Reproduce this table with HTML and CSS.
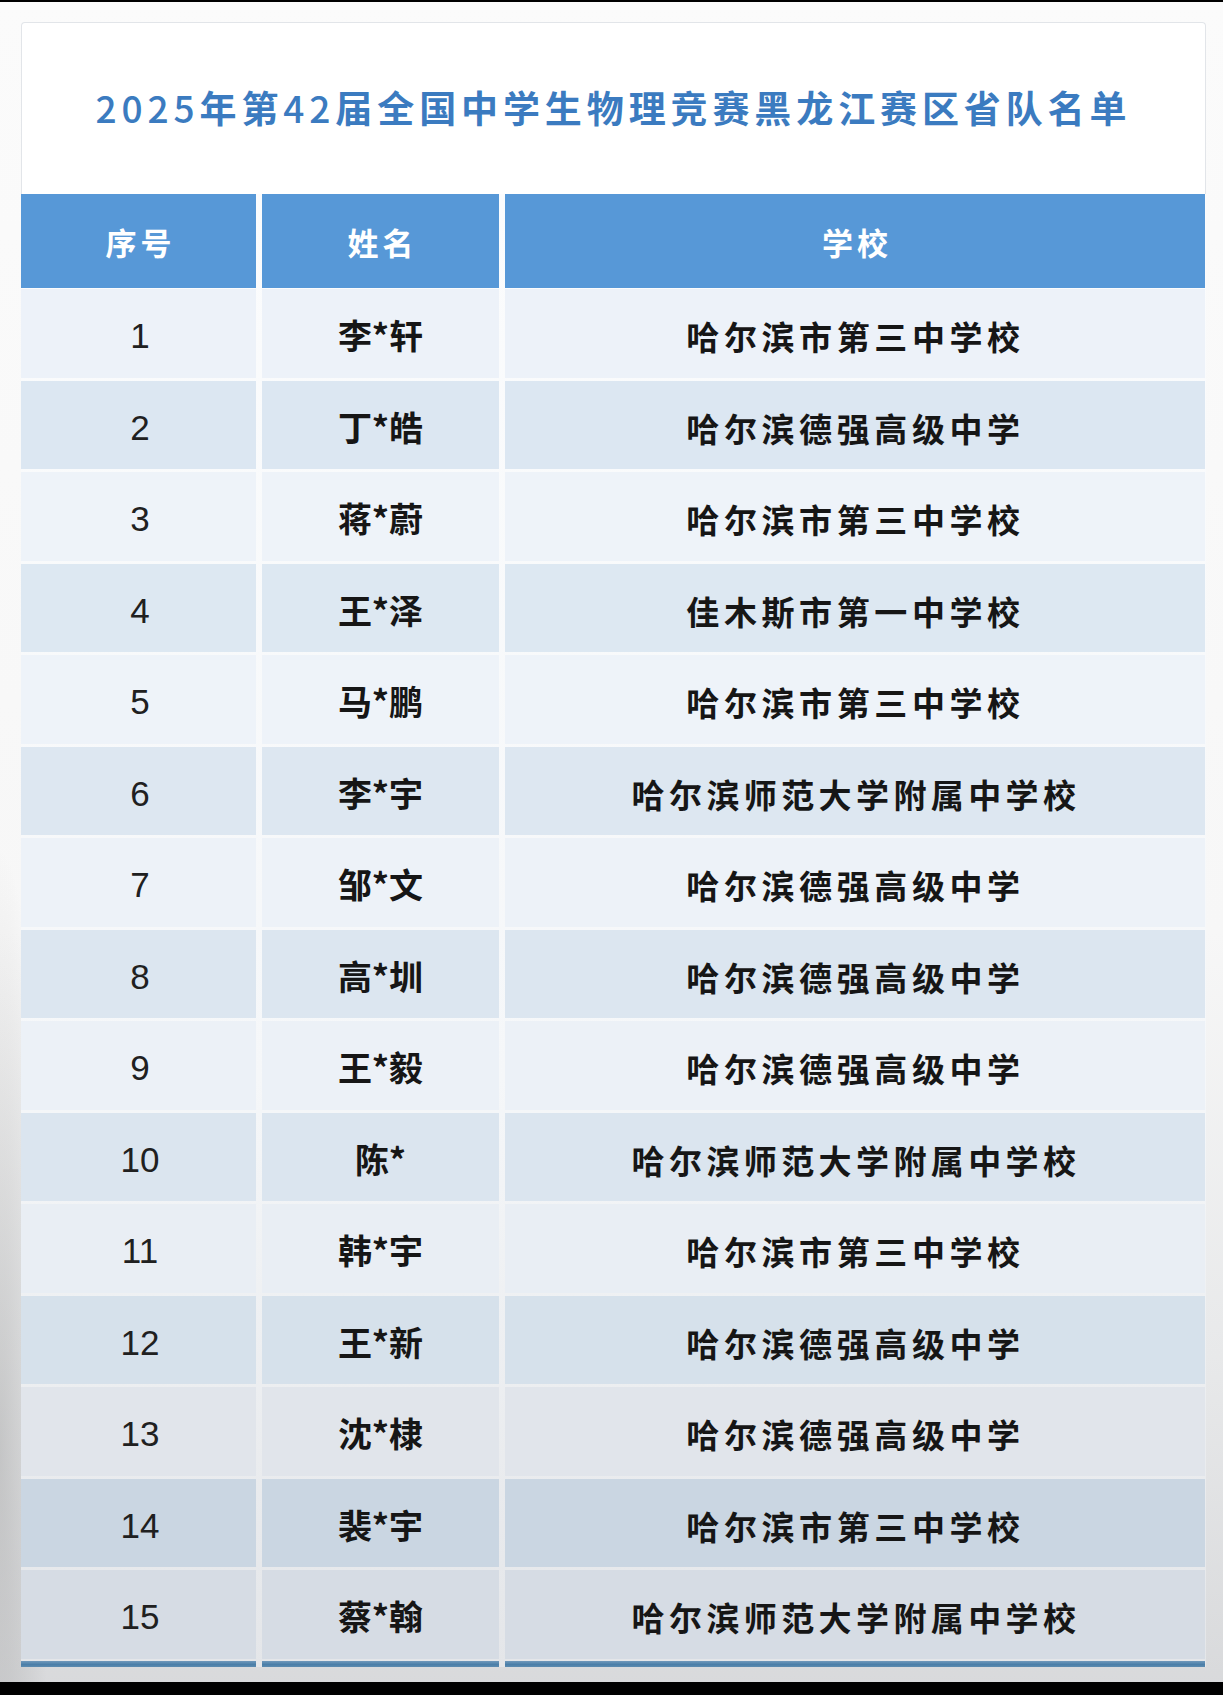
FILE: index.html
```html
<!DOCTYPE html>
<html lang="zh-CN">
<head>
<meta charset="utf-8">
<title>2025年第42届全国中学生物理竞赛黑龙江赛区省队名单</title>
<link rel="stylesheet" href="styles.css">
</head>
<body>
<div class="screen">
  <div class="topbar"></div>
  <main class="page">
    <section class="sheet">
      <header class="card">
        <h1 class="title"><span class="num">2025</span>年第<span class="num">42</span>届全国中学生物理竞赛黑龙江赛区省队名单</h1>
      </header>
      <div class="table">
        <div class="th">序号</div>
        <div class="th">姓名</div>
        <div class="th">学校</div>

        <div class="td no r1">1</div><div class="td name r1">李*轩</div><div class="td school r1">哈尔滨市第三中学校</div>
        <div class="td no r2">2</div><div class="td name r2">丁*皓</div><div class="td school r2">哈尔滨德强高级中学</div>
        <div class="td no r3">3</div><div class="td name r3">蒋*蔚</div><div class="td school r3">哈尔滨市第三中学校</div>
        <div class="td no r4">4</div><div class="td name r4">王*泽</div><div class="td school r4">佳木斯市第一中学校</div>
        <div class="td no r5">5</div><div class="td name r5">马*鹏</div><div class="td school r5">哈尔滨市第三中学校</div>
        <div class="td no r6">6</div><div class="td name r6">李*宇</div><div class="td school long r6">哈尔滨师范大学附属中学校</div>
        <div class="td no r7">7</div><div class="td name r7">邹*文</div><div class="td school r7">哈尔滨德强高级中学</div>
        <div class="td no r8">8</div><div class="td name r8">高*圳</div><div class="td school r8">哈尔滨德强高级中学</div>
        <div class="td no r9">9</div><div class="td name r9">王*毅</div><div class="td school r9">哈尔滨德强高级中学</div>
        <div class="td no r10">10</div><div class="td name r10">陈*</div><div class="td school long r10">哈尔滨师范大学附属中学校</div>
        <div class="td no r11">11</div><div class="td name r11">韩*宇</div><div class="td school r11">哈尔滨市第三中学校</div>
        <div class="td no r12">12</div><div class="td name r12">王*新</div><div class="td school r12">哈尔滨德强高级中学</div>
        <div class="td no r13">13</div><div class="td name r13">沈*棣</div><div class="td school r13">哈尔滨德强高级中学</div>
        <div class="td no r14">14</div><div class="td name r14">裴*宇</div><div class="td school r14">哈尔滨市第三中学校</div>
        <div class="td no r15">15</div><div class="td name r15">蔡*翰</div><div class="td school long r15">哈尔滨师范大学附属中学校</div>

        <div class="rule"></div><div class="rule"></div><div class="rule"></div>
      </div>
    </section>
  </main>
  <div class="bottombar"></div>
</div>
</body>
</html>
```

FILE: styles.css
```css
* { box-sizing: border-box; }

html, body {
  margin: 0;
  padding: 0;
}

body {
  font-family: "Noto Sans CJK SC", "Noto Sans", sans-serif;
  background: #000;
}

.screen {
  width: 1223px;
  height: 1695px;
  display: flex;
  flex-direction: column;
  background:
    radial-gradient(ellipse 50px 600px at 0px 1450px, rgba(150,150,150,0.4), rgba(150,150,150,0) 100%),
    linear-gradient(to bottom, #fbfbfb 0%, #f7f7f7 55%, #e8e9ea 80%, #d8d9db 100%);
}

.topbar {
  height: 2px;
  background: #000;
  flex: none;
}

.page {
  flex: 1;
  padding: 20px 17px 0 21px;
}

.card {
  background: #fff;
  border: 1px solid #e2e5e9;
  border-bottom: none;
  border-radius: 4px 4px 0 0;
  height: 172px;
  display: flex;
  align-items: center;
  justify-content: center;
}

.title {
  margin: 0;
  padding-bottom: 3px;
  font-size: 37px;
  font-weight: 700;
  letter-spacing: 4.9px;
  color: #3b7bc0;
  line-height: 1;
  white-space: nowrap;
}

.title .num {
  font-weight: 500;
}

.table {
  display: grid;
  grid-template-columns: 235px 237px 700px;
  column-gap: 6px;
  row-gap: 3px;
  grid-template-rows: 92px repeat(15, 88.5px) 5px;
  background: linear-gradient(to bottom, #fbfcfd 0%, #f5f7f9 60%, #e4e6e9 100%);
}

.th {
  background: #5798d7;
  color: #fff;
  font-size: 31px;
  font-weight: 700;
  letter-spacing: 4px;
  display: flex;
  align-items: center;
  justify-content: center;
  padding-top: 0;
  padding-left: 4px;
  margin-bottom: -2px;
}

.td {
  display: flex;
  align-items: center;
  justify-content: center;
  padding-top: 6px;
  color: #161616;
}

.no {
  font-family: "Liberation Sans", Arial, sans-serif;
  font-size: 35px;
  font-weight: 400;
  color: #202020;
  padding-left: 3px;
}

.name {
  font-size: 34px;
  font-weight: 700;
  padding-top: 3px;
}

.school {
  font-size: 33px;
  font-weight: 700;
  letter-spacing: 4.6px;
  padding-left: 1px;
}

.school.long {
  letter-spacing: 4.4px;
  padding-left: 2px;
}

.r1  { background: #edf2f9; }
.r2  { background: #dce7f2; }
.r3  { background: #eef3f9; }
.r4  { background: #dde8f2; }
.r5  { background: #eef3f9; }
.r6  { background: #dde7f1; }
.r7  { background: #edf2f8; }
.r8  { background: #dce6f0; }
.r9  { background: #ecf1f7; }
.r10 { background: #dbe5ef; }
.r11 { background: #e9eef4; }
.r12 { background: #d6e1eb; }
.r13 { background: #e1e5eb; }
.r14 { background: #cad6e2; }
.r15 { background: #d6dce4; }

.rule {
  background: linear-gradient(to bottom, #6f98bb 0%, #4a7ea8 60%, #5d8bb0 100%);
  margin-top: -1px;
}

.bottombar {
  height: 13px;
  background: #000;
  flex: none;
}
```
